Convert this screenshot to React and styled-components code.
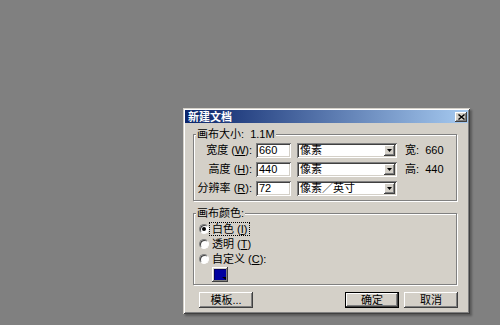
import React from 'react';
import styled, { createGlobalStyle, css } from 'styled-components';

const FACE = '#d4d0c8';

const Global = createGlobalStyle`
  *, *::before, *::after { box-sizing: border-box; }
  html, body { margin: 0; padding: 0; background: #808080; }
  body {
    font-family: "Liberation Sans", "Noto Sans CJK SC", sans-serif;
    font-size: 11px;
    color: #000;
  }
  u { text-decoration: underline; text-underline-offset: 1px; }
`;

const raised = css`
  background: ${FACE};
  box-shadow: inset -1px -1px 0 #404040, inset 1px 1px 0 #fff, inset -2px -2px 0 #808080;
`;

const sunken = css`
  background: #fff;
  box-shadow: inset 1px 1px 0 #808080, inset -1px -1px 0 #fff, inset 2px 2px 0 #404040,
    inset -2px -2px 0 ${FACE};
`;

const Desktop = styled.div`
  width: 500px;
  height: 325px;
  background: #808080;
  padding: 108px 0 0 183px;
  overflow: hidden;
`;

const Window = styled.div`
  width: 287px;
  height: 206px;
  background: ${FACE};
  padding: 2px;
  display: flex;
  flex-direction: column;
  box-shadow: inset 1px 1px 0 ${FACE}, inset -1px -1px 0 #404040, inset 2px 2px 0 #fff,
    inset -2px -2px 0 #808080, 2px 2px 2px rgba(0, 0, 0, 0.3);
`;

const TitleBar = styled.div`
  height: 13px;
  flex: none;
  display: flex;
  align-items: center;
  justify-content: space-between;
  padding: 0 1px 0 3px;
  background: linear-gradient(to right, #0a246a, #a6caf0);
`;

const Title = styled.span`
  color: #fff;
  font-weight: bold;
  font-size: 11px;
  line-height: 13px;
  font-family: "Noto Sans CJK SC", sans-serif;
`;

const CloseButton = styled.div`
  ${raised};
  width: 12px;
  height: 10px;
  display: flex;
  align-items: center;
  justify-content: center;
`;

const Body = styled.div`
  flex: 1;
  display: flex;
  flex-direction: column;
  padding: 0 11px 4px 8px;
`;

const Group = styled.div`
  position: relative;
  margin-top: ${(p) => p.$gap}px;
  border: 1px solid #808080;
  box-shadow: inset 1px 1px 0 #fff, 1px 1px 0 #fff;
  padding: ${(p) => p.$pad};
`;

const Legend = styled.span`
  position: absolute;
  left: 2px;
  top: -7px;
  padding: 0 1px;
  background: ${FACE};
  line-height: 13px;
  white-space: pre;
`;

const Rows = styled.div`
  display: flex;
  flex-direction: column;
  gap: 4px;
`;

const Row = styled.div`
  display: flex;
  align-items: center;
  height: 15px;
`;

const Label = styled.span`
  width: 58px;
  margin-right: 4px;
  text-align: right;
  white-space: nowrap;
  line-height: 15px;
`;

const TextField = styled.div`
  ${sunken};
  width: 35px;
  height: 15px;
  padding-left: 3px;
  line-height: 15px;
`;

const Select = styled.div`
  ${sunken};
  margin-left: 6px;
  width: 100px;
  height: 15px;
  display: flex;
  align-items: center;
  padding: 2px 2px 2px 3px;
`;

const SelectText = styled.span`
  flex: 1;
  line-height: 11px;
  white-space: nowrap;
`;

const ArrowButton = styled.div`
  ${raised};
  width: 11px;
  height: 11px;
  display: flex;
  align-items: center;
  justify-content: center;
`;

const Info = styled.span`
  margin-left: 8px;
  white-space: pre;
  line-height: 15px;
`;

const RadioList = styled.div`
  display: flex;
  flex-direction: column;
`;

const RadioRow = styled.div`
  display: flex;
  align-items: center;
  height: 15px;
  padding-left: 5px;
`;

const Radio = styled.span`
  position: relative;
  width: 10px;
  height: 10px;
  border-radius: 50%;
  background: #fff;
  border: 1px solid;
  border-color: #808080 #fff #fff #808080;
  box-shadow: inset 1px 1px 0 #404040;
  ${(p) =>
    p.$checked &&
    css`
      &::after {
        content: '';
        position: absolute;
        left: 2px;
        top: 2px;
        width: 4px;
        height: 4px;
        border-radius: 50%;
        background: #000;
      }
    `}
`;

const RadioText = styled.span`
  margin-left: 1px;
  padding: 0 2px;
  line-height: 12px;
  white-space: nowrap;
  outline: ${(p) => (p.$focused ? '1px dotted #000' : 'none')};
`;

const Swatch = styled.div`
  position: relative;
  margin: 1px 0 0 18px;
  width: 16px;
  height: 15px;
  padding: 2px;
  background: ${FACE};
  box-shadow: inset -1px -1px 0 #404040, inset 1px 1px 0 #fff, inset -2px -2px 0 #808080;
  &::before {
    content: '';
    display: block;
    width: 100%;
    height: 100%;
    background: #0000a0;
    box-shadow: inset 1px 1px 0 #000060;
  }
  &::after {
    content: '';
    position: absolute;
    right: 2px;
    bottom: 2px;
    width: 0;
    height: 0;
    border-left: 4px solid transparent;
    border-top: 3px solid #000;
  }
`;

const ButtonBar = styled.div`
  display: flex;
  gap: 5px;
  margin: 7px -1px 0 0;
  padding-left: 6px;
`;

const Spacer = styled.div`
  flex: 1;
`;

const Button = styled.div`
  width: 54px;
  height: 16px;
  display: flex;
  align-items: center;
  justify-content: center;
  line-height: 14px;
  white-space: nowrap;
  ${raised};
  ${(p) =>
    p.$default &&
    css`
      box-shadow: inset 0 0 0 1px #000, inset -2px -2px 0 #404040, inset 2px 2px 0 #fff,
        inset -3px -3px 0 #808080;
    `}
`;

const CloseIcon = () => (
  <svg width="7" height="6" viewBox="0 0 7 6">
    <path d="M0.5 0.5 L6.5 5.5 M6.5 0.5 L0.5 5.5" stroke="#000" strokeWidth="1.4" />
  </svg>
);

const DownArrow = () => (
  <svg width="5" height="3" viewBox="0 0 5 3">
    <path d="M0 0 H5 L2.5 3 Z" fill="#000" />
  </svg>
);

const sizeRows = [
  { label: '宽度', key: 'W', value: '660', unit: '像素', info: '宽:  660' },
  { label: '高度', key: 'H', value: '440', unit: '像素', info: '高:  440' },
  { label: '分辨率', key: 'R', value: '72', unit: '像素／英寸', info: null },
];

const colorRows = [
  { label: '白色', key: 'I', checked: true, suffix: '' },
  { label: '透明', key: 'T', checked: false, suffix: '' },
  { label: '自定义', key: 'C', checked: false, suffix: ':' },
];

export default function App() {
  return (
    <>
      <Global />
      <Desktop>
        <Window>
          <TitleBar>
            <Title>新建文档</Title>
            <CloseButton>
              <CloseIcon />
            </CloseButton>
          </TitleBar>
          <Body>
            <Group $gap={11} $pad="8px 0 4px 0">
              <Legend>画布大小:  1.1M</Legend>
              <Rows>
                {sizeRows.map((r) => (
                  <Row key={r.key}>
                    <Label>
                      {r.label} (<u>{r.key}</u>):
                    </Label>
                    <TextField>{r.value}</TextField>
                    <Select>
                      <SelectText>{r.unit}</SelectText>
                      <ArrowButton>
                        <DownArrow />
                      </ArrowButton>
                    </Select>
                    {r.info && <Info>{r.info}</Info>}
                  </Row>
                ))}
              </Rows>
            </Group>
            <Group $gap={12} $pad="7px 0 2px 0">
              <Legend>画布颜色:</Legend>
              <RadioList>
                {colorRows.map((r) => (
                  <RadioRow key={r.key}>
                    <Radio $checked={r.checked} />
                    <RadioText $focused={r.checked}>
                      {r.label} (<u>{r.key}</u>){r.suffix}
                    </RadioText>
                  </RadioRow>
                ))}
              </RadioList>
              <Swatch />
            </Group>
            <ButtonBar>
              <Button>模板...</Button>
              <Spacer />
              <Button $default>确定</Button>
              <Button>取消</Button>
            </ButtonBar>
          </Body>
        </Window>
      </Desktop>
    </>
  );
}
